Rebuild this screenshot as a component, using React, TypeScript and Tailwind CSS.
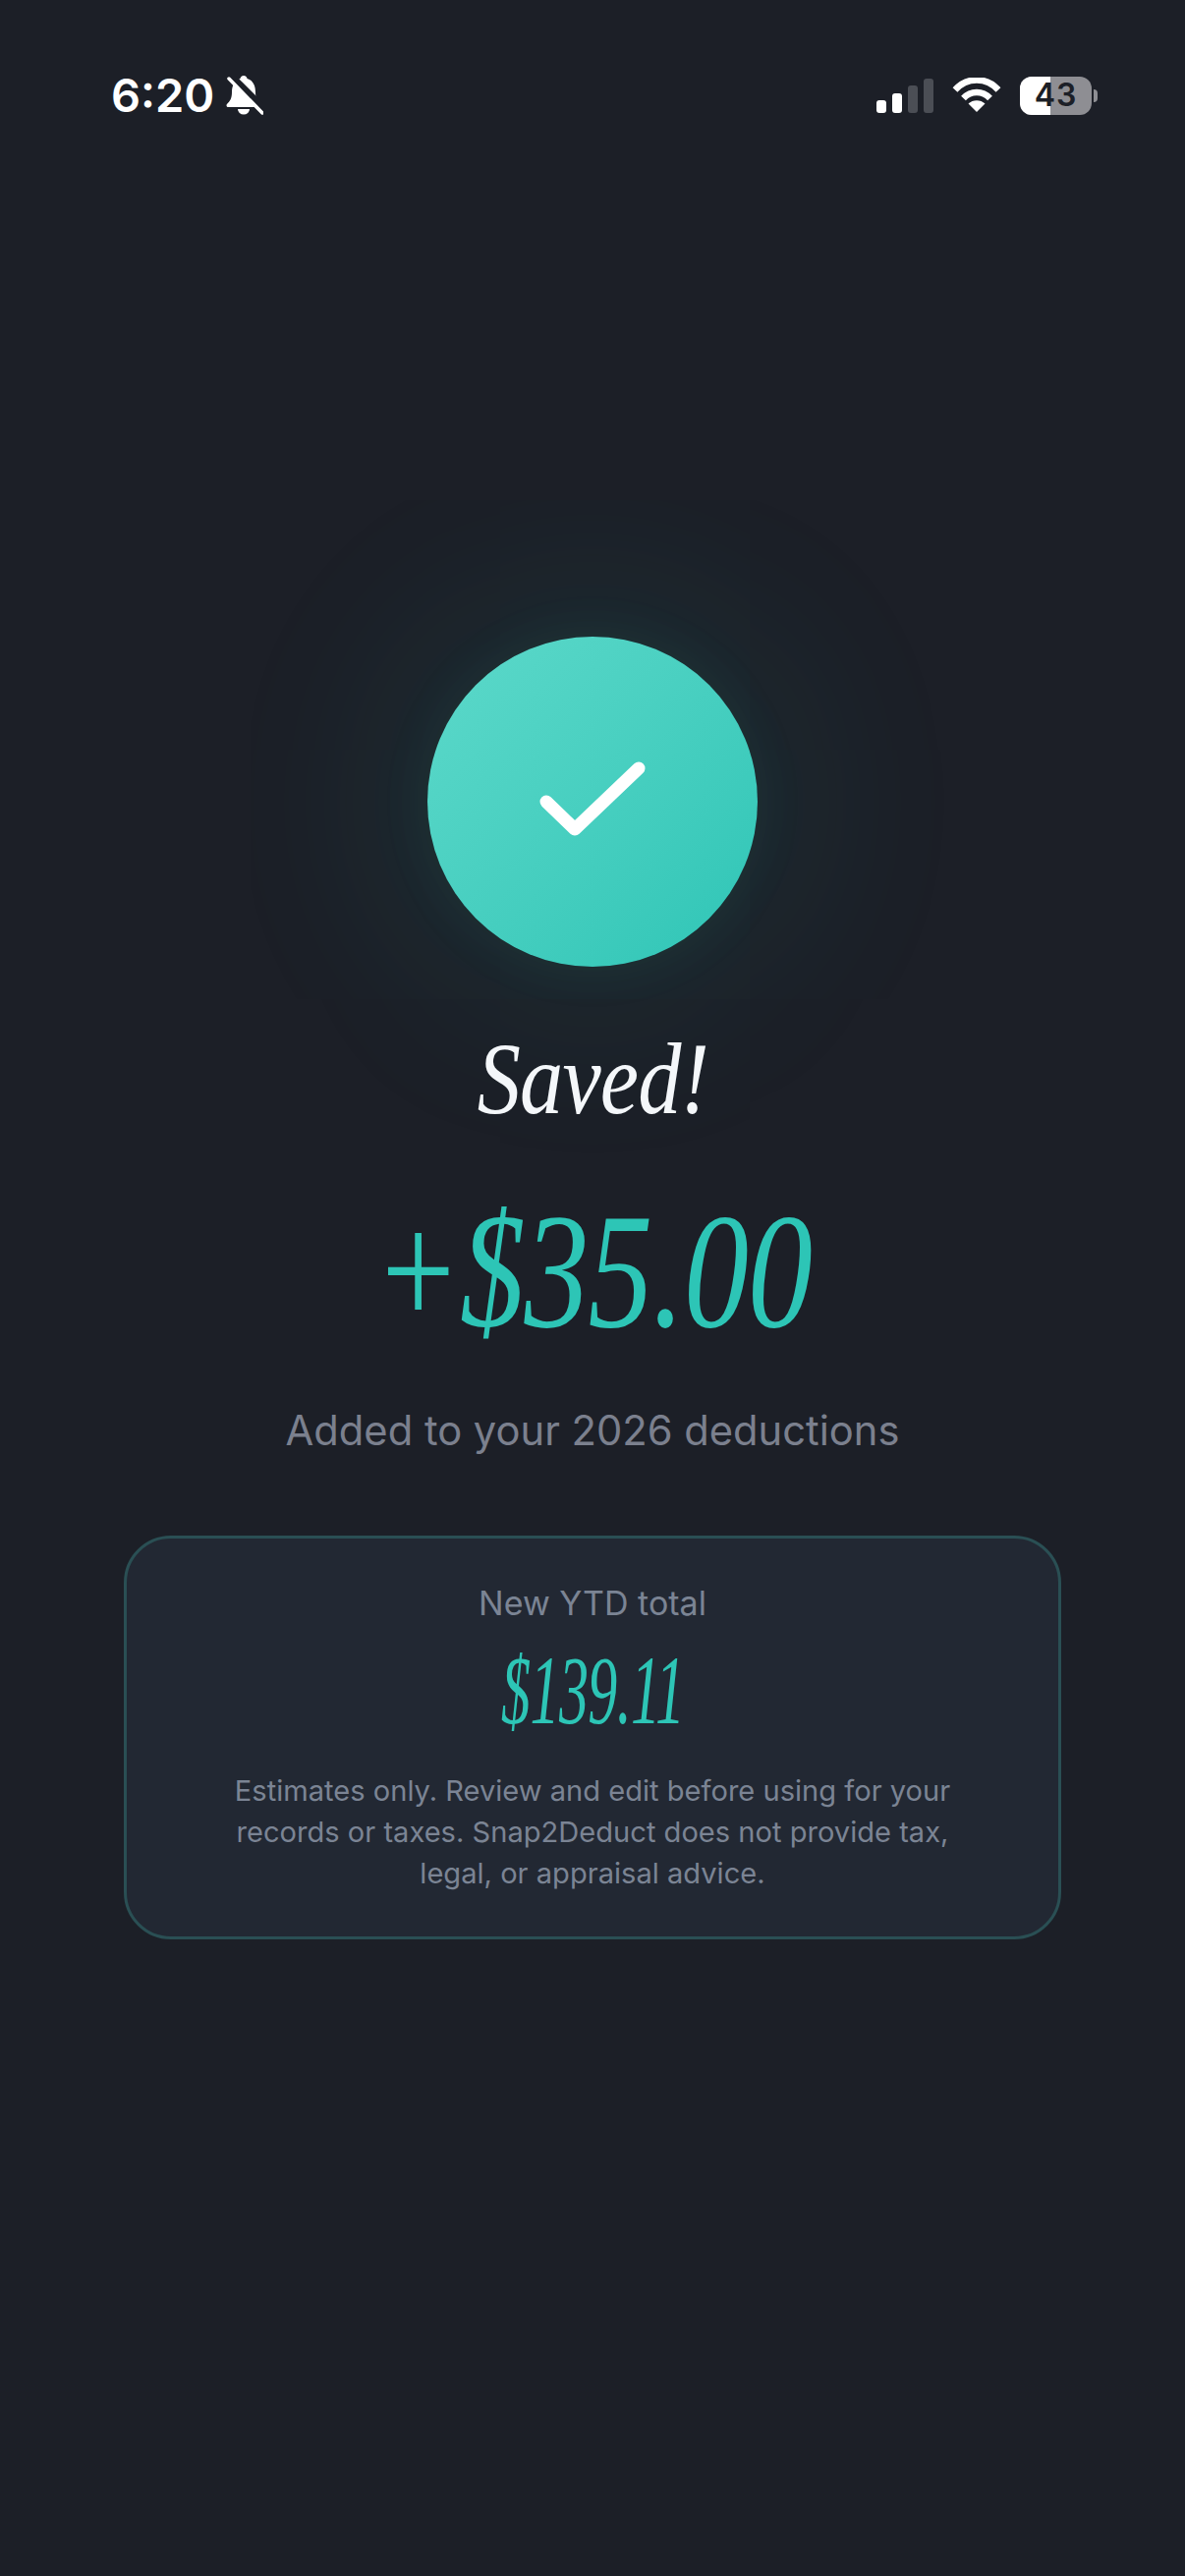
export default function App() {
  return (
    <div className="w-[1206px] h-[2622px] overflow-hidden bg-[#1c1f27] flex flex-col items-center font-['Inter','Noto_Sans',sans-serif]">
      <div className="w-full h-[140px] shrink-0 pl-[113px] pr-[89px] pt-[74px] flex justify-between items-start">
        <div className="flex items-center gap-[12px] h-[46px]">
          <span className="text-white text-[47px] leading-[46px] font-semibold tracking-[0px]">6:20</span>
          <svg width="38" height="40" viewBox="0 0 38 40">
            <path fill="#fff" d="M18 0c-2 0-3.500 1.500-3.500 3C8 5 6 11 6 17c0 6-2 9-5 12-1 1-.5 3 1.500 3h31c2 0 2.500-2 1.500-3-3-3-5-6-5-12 0-6-2-12-8.500-14 0-1.500-1.500-3-3.500-3z" />
            <path fill="#fff" d="M12 34h12a6 5.500 0 0 1-12 0z" />
            <path stroke="#1c1f27" strokeWidth="7" d="M5 0L40 35" />
            <path stroke="#fff" strokeWidth="3.500" strokeLinecap="round" d="M3 3L37 38" />
          </svg>
        </div>
        <div className="flex items-center gap-[19px] h-[46px]">
          <div className="flex items-end gap-[6px] h-[35px]">
            <div className="w-[10px] h-[13px] rounded-[3px] bg-white" />
            <div className="w-[10px] h-[20px] rounded-[3px] bg-white" />
            <div className="w-[10px] h-[28px] rounded-[3px] bg-[#4b4e55]" />
            <div className="w-[10px] h-[35px] rounded-[3px] bg-[#4b4e55]" />
          </div>
          <svg width="50" height="36" viewBox="0 0 50 36" fill="none" stroke="#fff" strokeLinecap="butt">
            <path strokeWidth="6.500" d="M3 12.500C15-1 35-1 47 12.500" />
            <path strokeWidth="6.500" d="M11.500 21C19 13 31 13 38.500 21" />
            <path stroke="none" fill="#fff" d="M25 35l-8.500-8.500c4.500-4.500 12.500-4.500 17 0z" />
          </svg>
          <div className="flex items-center">
            <div className="relative w-[73px] h-[39px] rounded-[12px] overflow-hidden bg-[#8e8e93] flex items-center justify-center">
              <div className="absolute left-0 top-0 bottom-0 w-[31px] bg-white" />
              <span className="relative text-[#1c1f27] text-[32px] leading-none font-semibold tracking-[1px]">43</span>
            </div>
            <div className="ml-[2px] w-[4px] h-[13px] rounded-r-full bg-[#8e8e93]" />
          </div>
        </div>
      </div>

      <div className="mt-[508px] w-[336px] h-[336px] shrink-0 rounded-full bg-gradient-to-br from-[#5cd9ca] to-[#2dc5b6] shadow-[0_0_60px_rgba(45,197,182,0.06),0_0_200px_30px_rgba(45,197,182,0.12)] flex items-center justify-center">
        <svg width="120" height="120" viewBox="0 0 120 120" fill="none" stroke="#fff" strokeWidth="13" strokeLinecap="round" strokeLinejoin="round">
          <path d="M13 60L42 88L107 26" />
        </svg>
      </div>

      <h1 className="mt-[54px] text-[#f4f7fa] text-[104px] leading-[120px] font-normal italic font-['Liberation_Serif',serif] scale-x-[0.85] tracking-[-1px]">Saved!</h1>
      <div className="mt-[40px] text-[#2dc5b6] text-[168px] leading-[190px] italic font-['Liberation_Serif',serif] scale-x-[0.785] tracking-[-1px]">+$35.00</div>
      <p className="mt-[40px] text-[#7b808e] text-[41.700px] leading-[56px]">Added to your 2026 deductions</p>

      <div className="mt-[79px] w-[954px] h-[411px] rounded-[48px] border-[3px] border-[#2a4f54] bg-[#222833] flex flex-col items-center pt-[42px]">
        <p className="text-[#7b8494] text-[34px] leading-[48px]">New YTD total</p>
        <div className="mt-[13px] text-[#2dc5b6] text-[100px] leading-[104px] italic font-['Liberation_Serif',serif] scale-x-[0.6] tracking-[-1px]">$139.11</div>
        <p className="mt-[29px] w-[760px] text-center text-[#7b8494] text-[29.100px] leading-[42px]">
          Estimates only. Review and edit before using for your records or taxes. Snap2Deduct does not provide tax, legal, or appraisal advice.
        </p>
      </div>
    </div>
  );
}
